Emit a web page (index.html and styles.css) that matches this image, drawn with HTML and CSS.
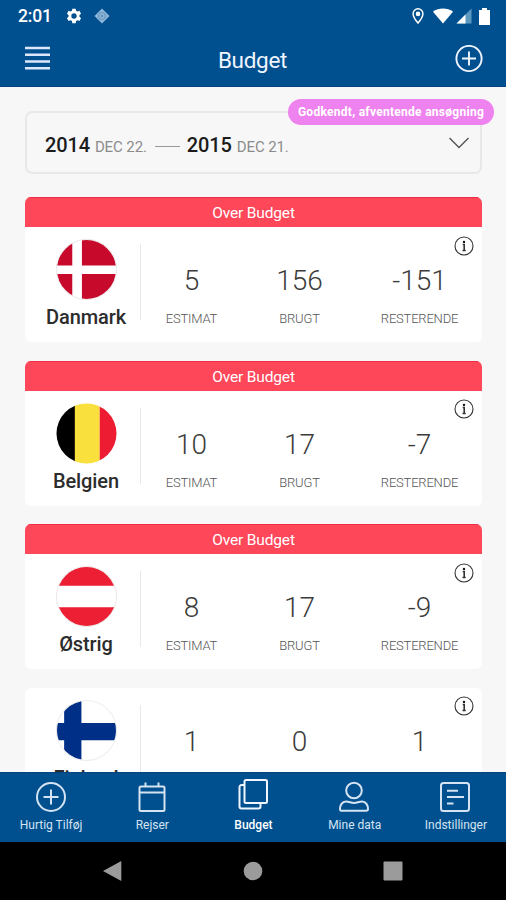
FILE: index.html
```html
<!DOCTYPE html>
<html lang="da">
<head>
<meta charset="utf-8">
<title>Budget</title>
<link rel="stylesheet" href="styles.css">
</head>
<body>
<div class="app">
  <div class="status">
    <span class="clock">2:01</span>
    <svg class="gear" width="16" height="16" viewBox="0 0 24 24"><path fill="#fff" fill-rule="evenodd" d="M9.500 1h5l.6 3.200 2 1.100 3-1.100 2.500 4.300-2.400 2.100v2.500l2.400 2.100-2.500 4.300-3-1.100-2 1.200-.6 3.200h-5l-.6-3.200-2-1.200-3 1.100-2.500-4.300 2.400-2.100v-2.500L1.400 8.500l2.500-4.300 3 1.100 2-1.100zM12 8a4 4 0 1 0 0 8 4 4 0 0 0 0-8z"/></svg>
    <svg class="diamond" width="16" height="16" viewBox="0 0 16 16"><path d="M8 .5 15.500 8 8 15.500.5 8z" fill="#8db6d8"/><circle cx="8" cy="8" r="3.500" fill="none" stroke="#5c90bc"/><circle cx="8" cy="8" r="1.300" fill="#5c90bc"/></svg>
    <div class="signals">
      <svg width="12" height="16" viewBox="0 0 12 16"><path d="M6 .8a4.900 4.900 0 0 0-4.900 4.900C1.100 9.300 6 15 6 15s4.900-5.700 4.900-9.300A4.900 4.900 0 0 0 6 .8z" fill="none" stroke="#fff" stroke-width="1.500"/><circle cx="6" cy="5.900" r="2.300" fill="#fff"/></svg>
      <svg class="wifi" width="20" height="16" viewBox="0 0 20 16"><path d="M0 3.800C5.500-.6 14.500-.6 20 3.800L10 15.500z" fill="#fff"/></svg>
      <svg class="cell" width="16" height="16" viewBox="0 0 16 16"><path d="M15.500.5v15H.5z" fill="#5c98bf"/><path d="M9.500 6.500v9h-9z" fill="#fff"/></svg>
      <svg class="battery" width="11" height="17" viewBox="0 0 11 17"><path d="M3 0h5v2h3v15H0V2h3z" fill="#fff"/></svg>
    </div>
  </div>
  <header class="bar">
    <svg width="25" height="26" viewBox="0 0 25 26"><path d="M0 2h25M0 8.700h25M0 15.500h25M0 22.300h25" stroke="#dce6fa" stroke-width="2.400"/></svg>
    <h1>Budget</h1>
    <svg width="28" height="28" viewBox="0 0 28 28" fill="none" stroke="#f0f5ff" stroke-width="1.900"><circle cx="14" cy="13.500" r="12.600"/><path d="M14 6.500v14M7 13.500h14"/></svg>
  </header>
  <main>
    <div class="period">
      <b>2014</b><span class="day">DEC 22.</span><i class="dash"></i><b>2015</b><span class="day">DEC 21.</span>
      <svg class="chevron" width="22" height="14" viewBox="0 0 22 14"><path d="m1.500 2 9.500 9.500L20.500 2" fill="none" stroke="#555" stroke-width="1.400"/></svg>
      <span class="badge">Godkendt, afventende ansøgning</span>
    </div>

    <section class="card">
      <div class="over">Over Budget</div>
      <div class="body">
        <div class="country">
          <svg class="flag" viewBox="0 0 60 60"><clipPath id="c"><circle cx="30" cy="30" r="29.500"/></clipPath><g clip-path="url(#c)"><path fill="#c70a2c" d="M0 0h60v60H0z"/><path fill="#fff" d="M16 0h9.500v60H16zM0 26h60v8.500H0z"/></g><circle class="ring" cx="30" cy="30" r="29.500"/></svg>
          <strong>Danmark</strong>
        </div>
        <div class="stat"><span class="num">5</span><span class="label">ESTIMAT</span></div>
        <div class="stat"><span class="num">156</span><span class="label">BRUGT</span></div>
        <div class="stat"><span class="num">-151</span><span class="label">RESTERENDE</span></div>
        <svg class="info" viewBox="0 0 20 20"><circle cx="10" cy="10" r="9"/><path d="M8.700 8.500h1.500v6M8.500 14.500h3.200"/><circle class="dot" cx="10" cy="5.900" r="1.200"/></svg>
      </div>
    </section>

    <section class="card">
      <div class="over">Over Budget</div>
      <div class="body">
        <div class="country">
          <svg class="flag" viewBox="0 0 60 60"><g clip-path="url(#c)"><path d="M0 0h19v60H0z"/><path fill="#f9e03c" d="M18.500 0H43v60H18.500z"/><path fill="#ed1c32" d="M43 0h17v60H43z"/></g></svg>
          <strong>Belgien</strong>
        </div>
        <div class="stat"><span class="num">10</span><span class="label">ESTIMAT</span></div>
        <div class="stat"><span class="num">17</span><span class="label">BRUGT</span></div>
        <div class="stat"><span class="num">-7</span><span class="label">RESTERENDE</span></div>
        <svg class="info" viewBox="0 0 20 20"><circle cx="10" cy="10" r="9"/><path d="M8.700 8.500h1.500v6M8.500 14.500h3.200"/><circle class="dot" cx="10" cy="5.900" r="1.200"/></svg>
      </div>
    </section>

    <section class="card">
      <div class="over">Over Budget</div>
      <div class="body">
        <div class="country">
          <svg class="flag" viewBox="0 0 60 60"><g clip-path="url(#c)"><path fill="#ed1f34" d="M0 0h60v60H0z"/><path fill="#fff" d="M0 19.500h60V40.500H0z"/></g><circle class="ring" cx="30" cy="30" r="29.500"/></svg>
          <strong>Østrig</strong>
        </div>
        <div class="stat"><span class="num">8</span><span class="label">ESTIMAT</span></div>
        <div class="stat"><span class="num">17</span><span class="label">BRUGT</span></div>
        <div class="stat"><span class="num">-9</span><span class="label">RESTERENDE</span></div>
        <svg class="info" viewBox="0 0 20 20"><circle cx="10" cy="10" r="9"/><path d="M8.700 8.500h1.500v6M8.500 14.500h3.200"/><circle class="dot" cx="10" cy="5.900" r="1.200"/></svg>
      </div>
    </section>

    <section class="card">
      <div class="body">
        <div class="country">
          <svg class="flag" viewBox="0 0 60 60"><g clip-path="url(#c)"><path fill="#fff" d="M0 0h60v60H0z"/><path fill="#002f87" d="M8 0h17v60H8zM0 22.500h60v17H0z"/></g><circle class="ring" cx="30" cy="30" r="29.500"/></svg>
          <strong>Finland</strong>
        </div>
        <div class="stat"><span class="num">1</span></div>
        <div class="stat"><span class="num">0</span></div>
        <div class="stat"><span class="num">1</span></div>
        <svg class="info" viewBox="0 0 20 20"><circle cx="10" cy="10" r="9"/><path d="M8.700 8.500h1.500v6M8.500 14.500h3.200"/><circle class="dot" cx="10" cy="5.900" r="1.200"/></svg>
      </div>
    </section>
  </main>
  <nav class="tabs">
    <a><svg viewBox="0 0 32 32"><circle cx="16" cy="16" r="14"/><path d="M16 8.500v15M8.500 16h15"/></svg><span>Hurtig Tilføj</span></a>
    <a><svg viewBox="0 0 32 32"><rect x="3.500" y="5.500" width="25" height="24.500" rx="1.500"/><path d="M3.500 11.500h25M9.500 1.500v4M22.500 1.500v4"/></svg><span>Rejser</span></a>
    <a class="active"><svg viewBox="0 0 32 32"><rect x="7.500" y="-1" width="22.500" height="23" rx="1.500"/><path d="M7.500 4H4.500a2 2 0 0 0-2 2v19.500a2 2 0 0 0 2 2h17a2 2 0 0 0 2-2V22"/></svg><span>Budget</span></a>
    <a><svg viewBox="0 0 32 32"><circle cx="16" cy="9.500" r="7.800"/><path d="M8 20.500c3 0 5 1.500 8 1.500s5-1.500 8-1.500c4 0 6 4 6 7.500 0 1.300-.7 1.800-2 1.800H4c-1.300 0-2-.5-2-1.800 0-3.500 2-7.500 6-7.500z"/></svg><span>Mine data</span></a>
    <a><svg viewBox="0 0 32 32"><rect x="2" y="2" width="28" height="28" rx="2.500"/><path d="M8 9.800h11M8 16h17M8 22.500h6.500"/></svg><span>Indstillinger</span></a>
  </nav>
  <div class="system">
    <svg width="20" height="22" viewBox="0 0 20 22"><path d="M0 11 18.300 1v20z"/></svg>
    <svg width="20" height="22" viewBox="0 0 20 22"><circle cx="10" cy="11" r="9.300"/></svg>
    <svg width="20" height="22" viewBox="0 0 20 22"><rect x=".5" y="1.500" width="19" height="19" rx="1"/></svg>
  </div>
</div>
</body>
</html>
```
FILE: styles.css
```css
* { box-sizing: border-box; }
body { margin: 0; font-family: Roboto, "Liberation Sans", sans-serif; }
svg { display: block; flex: none; }
.app { width: 506px; height: 900px; display: flex; flex-direction: column; overflow: hidden; background: #f7f7f7; }

.status { flex: none; height: 32px; display: flex; align-items: center; padding: 0 16px 0 18px; background: #00508f; color: #fff; }
.clock { width: 48px; font-size: 17.500px; font-weight: 500; letter-spacing: -.2px; }
.diamond { margin-left: 12px; }
.signals { margin-left: auto; display: flex; align-items: center; }
.wifi { margin-left: 9px; }
.cell { margin-left: 3px; }
.battery { margin-left: 7px; }

.bar { flex: none; height: 55px; display: flex; align-items: center; justify-content: space-between; padding: 0 23px 0 25px; background: #00508f; border-bottom: 1px solid #064081; }
.bar h1 { margin: 2px 0 0; font-size: 22.500px; line-height: 28px; font-weight: 400; letter-spacing: -.3px; color: #f0f5ff; }

main { flex: 1; min-height: 0; overflow: hidden; padding: 24px 24px 0 25px; display: flex; flex-direction: column; }
.period { position: relative; flex: none; height: 63px; margin-bottom: 23px; display: flex; align-items: baseline; padding: 21px 10px 0 18px; border: 2px solid #e8e8e8; border-radius: 7px; }
.period b { font-size: 20px; line-height: 23px; font-weight: 500; letter-spacing: -.15px; color: #1c1c1c; }
.day { margin-left: 5px; font-size: 15px; letter-spacing: -.1px; color: #8c8c8c; }
.dash { align-self: flex-start; width: 25px; height: 1px; margin: 12px 7px 0 8px; background: #999; }
.chevron { align-self: flex-start; margin: 2px 0 0 auto; }
.badge { position: absolute; right: -14px; top: -14px; width: 206px; height: 26px; border-radius: 13px; background: #ee82ee; color: #fff; font-size: 12px; line-height: 27px; font-weight: 700; letter-spacing: .28px; text-align: center; white-space: nowrap; }

.card { flex: none; margin-bottom: 18.500px; border-radius: 6px; overflow: hidden; background: #fff; }
.over { height: 30px; background: #ff475a; border-top: 1px solid #ef2d42; color: #fff; font-size: 15.500px; letter-spacing: -.15px; line-height: 31px; text-align: center; }
.body { position: relative; height: 115px; display: grid; grid-template-columns: 110px 101px 115px 125px; padding-left: 6px; }
.country { display: flex; flex-direction: column; align-items: center; padding-top: 12px; background: linear-gradient(#e8e8e8, #e8e8e8) 109px 17px / 1px 76px no-repeat; }
.flag { width: 61px; height: 61px; }
.ring { fill: none; stroke: #eee; stroke-width: 1; }
.country strong { margin-top: 5px; font-size: 20px; line-height: 24px; font-weight: 500; letter-spacing: -.1px; color: #2c2c2c; }
.stat { display: flex; flex-direction: column; align-items: center; padding-top: 37px; }
.num { font-size: 28px; line-height: 34px; font-weight: 300; color: #3c3c3c; }
.label { margin-top: 13px; font-size: 13px; line-height: 16px; font-weight: 300; letter-spacing: -.2px; color: #555; }
.info { position: absolute; right: 8px; top: 8.500px; width: 20px; height: 20px; fill: none; stroke: #333; stroke-width: 1.100; }
.info path { stroke-width: 1.600; }
.info .dot { fill: #111; stroke: none; }

.tabs { flex: none; height: 70px; display: grid; grid-template-columns: repeat(5, 1fr); background: #00508f; border-top: 1px solid #06447f; }
.tabs a { display: flex; flex-direction: column; align-items: center; padding-top: 8px; color: #d5e3f2; font-size: 12px; line-height: 16px; }
.tabs svg { width: 32px; height: 32px; overflow: visible; fill: none; stroke: #d5e3f2; stroke-width: 2; }
.tabs span { margin-top: 4px; padding-left: 1px; }
.tabs .active { color: #fff; font-weight: 500; }
.tabs .active svg { stroke: #f0f5ff; }

.system { flex: none; height: 58px; display: flex; justify-content: space-between; align-items: center; padding: 0 103px; background: #000; }
.system svg { fill: #9b9b9b; }
```
